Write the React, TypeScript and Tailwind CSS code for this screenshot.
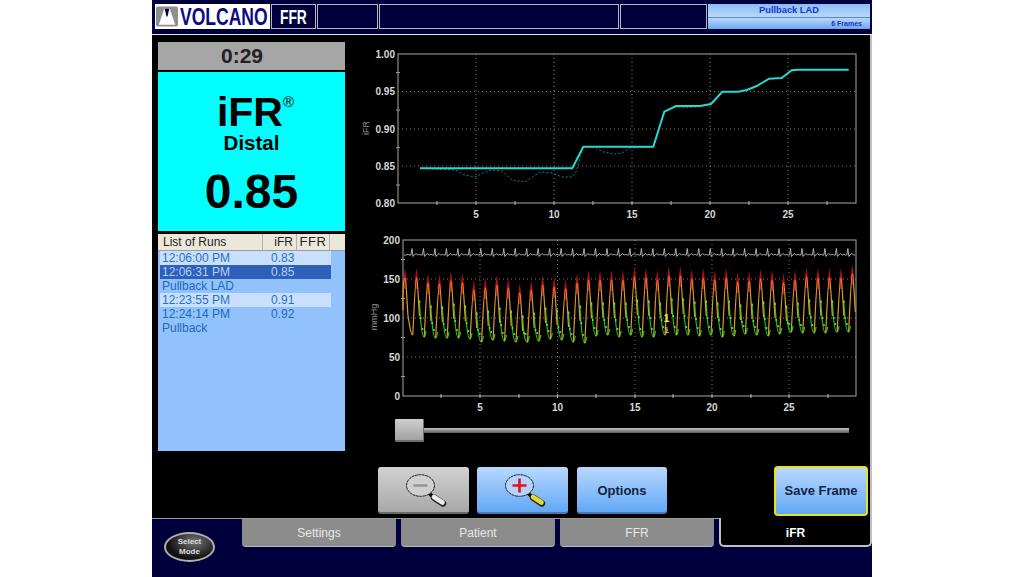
import React from "react";

const NAVY = "#00003c";
const font = { fontFamily: '"Liberation Sans", Arial, sans-serif' };

const cyanPts: [number, number][] = [[420,168.3],[572.3,168.3],[583.3,146.7],[653.3,146.7],[664.3,111.7],[676,106],[700,106],[711,104],[722.3,91.7],[738.3,91.7],[746.7,90],[756.7,86],[769,78.7],[781.7,78],[791.7,70.3],[798.3,69.7],[848.7,69.7]];
const dashPts: [number, number][] = [[420,168.3],[455,170],[465,175],[475,177],[483,173],[492,170],[502,171],[512,180],[525,182],[532,177],[540,172],[552,173],[562,177],[572,177],[576,172],[583,146.7],[595,147],[603,152],[615,154],[622,153],[630,148],[653,146.7],[664.3,111.7],[676,107],[690,107.5],[700,106.5],[711,104]];
const toPts = (p: [number, number][]) => p.map((q) => q.join(",")).join(" ");

function Chart1() {
  const xs = [476, 554, 632, 710, 788];
  const minor = [437, 515, 593, 671, 749, 827];
  const ys: [string, number][] = [["1.00",54],["0.95",91.5],["0.90",129],["0.85",166],["0.80",203]];
  return (
    <svg viewBox="355 45 510 180" className="w-[510px] h-[180px] block" style={font}>
      {ys.slice(1, 4).map(([, y]) => <line key={y} x1={398} x2={856} y1={y} y2={y} stroke="#9a9a9a" strokeWidth={0.8} strokeDasharray="1 3" />)}
      {xs.map((x) => <line key={x} x1={x} x2={x} y1={54} y2={203} stroke="#9a9a9a" strokeWidth={0.8} strokeDasharray="1 3" />)}
      <rect x={398} y={54} width={458} height={149} fill="none" stroke="#8c8c8c" strokeWidth={1.2} />
      {[72.6,110,147.6,185].map((y) => <line key={y} x1={396} x2={400} y1={y} y2={y} stroke="#999" />)}
      {[...minor, ...xs].map((x) => <line key={x} x1={x} x2={x} y1={201} y2={205} stroke="#bbb" />)}
      {ys.map(([t, y]) => <text key={t} x={395} y={y + 3.5} textAnchor="end" fontSize={10} fontWeight={700} fill="#d8d8d8">{t}</text>)}
      {xs.map((x, i) => <text key={x} x={x} y={218} textAnchor="middle" fontSize={10} fontWeight={700} fill="#d8d8d8">{(i + 1) * 5}</text>)}
      <text transform="translate(369 128) rotate(-90)" textAnchor="middle" fontSize={9} fill="#8f8f8f">iFR</text>
      <polyline points={toPts(dashPts)} fill="none" stroke="#17867f" strokeWidth={1} strokeDasharray="2 2" />
      <polyline points={toPts(cyanPts)} fill="none" stroke="#2ad6d0" strokeWidth={2} />
    </svg>
  );
}

// Per-beat peak and trough heights of the pressure trace, in page pixels
const pk = [278,278,283,284,281,283,290,288,285,288,293,290,285,287,289,283,280,280,280,280,277,278,280,276,276,279,278,280,278,282,281,279,280,283,280,277,278,278,278,274];
const tr = [335,337,338,338,338,339,342,340,341,342,342,341,339,340,342,343,336,335,337,335,337,337,335,335,335,336,335,337,336,334,335,336,334,332,333,333,333,332,332,331];

function Chart2() {
  const xs = [480, 557.5, 635, 712, 789];
  const minor = [441, 519, 596, 673, 751, 828];
  const sp = 11.47;
  const x0 = 405;
  const ecg: string[] = [];
  for (let i = 0; i < 39; i++) {
    const b = x0 + 6 + i * sp;
    ecg.push(`L${b - 4},255 l1,-1 l1,1 L${b},255 l1,-6.5 l1,8 l1,-1.5 L${b + 3.5},255 l1.5,-1.6 l1.5,1.6`);
  }
  const orange: string[] = [];
  const red: string[] = [];
  const green: string[] = [];
  const dots: [number, number][] = [];
  pk.forEach((yp, i) => {
    const xp = x0 + i * sp;
    const yt = tr[i];
    const prev = i > 0 ? tr[i - 1] : 310;
    const xt = xp + 7.6;
    const xStart = Math.max(xp - 3.7, 403);
    orange.push(`M${xStart},${prev} C${xp - 2.4},${prev - 25} ${xp - 1.2},${yp} ${xp},${yp} C${xp + 1.2},${yp} ${xp + 1.8},${yp + 22} ${xp + 3},${yp + 38}`);
    if (i === 0) orange.push(`M${xp + 3},${yp + 38} C${xp + 4},${yt - 14} ${xt - 2},${yt} ${xt},${yt}`);
    red.push(`M${xp},${yp - 10} L${xp + 1.9},${yp + 3} L${xp + 1},${yp + 11} L${xp - 1},${yp + 11} L${xp - 1.9},${yp + 3} Z`);
    if (i > 0 && xt < 857) {
      green.push(`M${xp + 2.8},${yp + 22} C${xp + 4},${yp + 44} ${xt - 2},${yt} ${xt},${yt} C${xt + 0.8},${yt} ${xt + 1.4},${yt - 2} ${xt + 2},${yt - 6}`);
      dots.push([xp + 3, yp + 24], [xp + 4.3, yp + 40], [xp + 6, yt - 8]);
    }
  });
  const ys: [string, number][] = [["200",240],["150",279],["100",318],["50",357],["0",396]];
  return (
    <svg viewBox="355 232 510 180" className="w-[510px] h-[180px] block" style={font}>
      {[279, 318, 357].map((y) => <line key={y} x1={403} x2={856} y1={y} y2={y} stroke="#9a9a9a" strokeWidth={0.8} strokeDasharray="1 3" />)}
      {xs.map((x) => <line key={x} x1={x} x2={x} y1={240} y2={396} stroke="#9a9a9a" strokeWidth={0.8} strokeDasharray="1 3" />)}
      <rect x={403} y={240} width={453} height={156} fill="none" stroke="#8c8c8c" strokeWidth={1.2} />
      {[259.5,298.5,337.5,376.5].map((y) => <line key={y} x1={401} x2={405} y1={y} y2={y} stroke="#999" />)}
      {[...minor, ...xs].map((x) => <line key={x} x1={x} x2={x} y1={394} y2={398} stroke="#bbb" />)}
      {ys.map(([t, y]) => <text key={t} x={400} y={y + 3.5} textAnchor="end" fontSize={10} fontWeight={700} fill="#d8d8d8">{t}</text>)}
      {xs.map((x, i) => <text key={x} x={x} y={411} textAnchor="middle" fontSize={10} fontWeight={700} fill="#d8d8d8">{(i + 1) * 5}</text>)}
      <text transform="translate(377 317) rotate(-90)" textAnchor="middle" fontSize={9} fill="#8f8f8f">mmHg</text>
      <path d={`M404,255 ${ecg.join(" ")} L855,255`} fill="none" stroke="#d0d0d0" strokeWidth={0.8} />
      <path d={red.join(" ")} fill="#a8101c" />
      <path d={green.join(" ")} fill="none" stroke="#19c419" strokeWidth={1.3} />
      {dots.map(([x, y], i) => <circle key={i} cx={x} cy={y} r={1} fill="#55e855" />)}
      <path d={orange.join(" ")} fill="none" stroke="#e09a2c" strokeWidth={1.2} />
      <text x={666.5} y={322} textAnchor="middle" fontSize={10} fontWeight={700} fill="#f2f23a">1</text>
      <text x={666.5} y={333} textAnchor="middle" fontSize={9} fontWeight={700} fill="#d98a8a">1</text>
    </svg>
  );
}

function Lens({ fill, sign, handle }: { fill: string; sign: "plus" | "minus"; handle: string }) {
  return (
    <svg viewBox="0 0 41 33" className="w-[41px] h-[33px] block ml-[5px] mt-[2px]">
      <line x1="22" y1="18" x2="27" y2="23" stroke="#111" strokeWidth="3.5" />
      <line x1="28" y1="23.5" x2="37" y2="29.5" stroke="#222" strokeWidth="6.4" strokeLinecap="round" />
      <line x1="28" y1="23" x2="36.5" y2="28.5" stroke={handle} strokeWidth="4.6" strokeLinecap="round" />
      <ellipse cx="14.5" cy="11.5" rx="14" ry="10.8" fill={fill} stroke="#1b1b1b" strokeWidth="1" strokeDasharray="3 0.5" />
      {sign === "plus" ? (
        <path d="M7.5 11.5h14M14.5 4.5v14" stroke="#e01020" strokeWidth="2.6" />
      ) : (
        <path d="M7.5 11.5h14" stroke="#969696" strokeWidth="2.6" />
      )}
    </svg>
  );
}

const blueBtn = "bg-gradient-to-b from-[#b8d8ff] to-[#62a8f4]";

const runs = [
  { t: "12:06:00 PM", v: "0.83", kind: "light" },
  { t: "12:06:31 PM", v: "0.85", kind: "sel" },
  { t: "Pullback LAD", v: "", kind: "" },
  { t: "12:23:55 PM", v: "0.91", kind: "light" },
  { t: "12:24:14 PM", v: "0.92", kind: "" },
  { t: "Pullback", v: "", kind: "" },
];

export default function App() {
  return (
    <div className="w-[1024px] h-[577px] bg-white flex justify-center overflow-hidden" style={font}>
      <div className="w-[720px] h-[577px] flex flex-col">
        {/* header */}
        <div className="h-[35px] shrink-0 border-b border-[#e8e8e8]" style={{ background: NAVY }}>
          <div className="flex items-stretch h-[25px] mt-[4px] pl-[3px] pr-[2px] gap-px">
            <div className="w-[115px] bg-white flex items-center pl-[1px] gap-[2px]">
              <svg viewBox="0 0 24 22" className="w-[22px] h-[21px] shrink-0">
                <rect width="24" height="22" rx="2" fill="#8f8f8f" />
                <path d="M3 20 L9 2.5 H15 L21 20 Z" fill="#fff" />
                <path d="M9.5 2.5 H14.5 L12.6 11 H11.4 Z" fill="#00004a" />
              </svg>
              <span className="text-[#0b0b80] font-bold text-[24px] leading-none scale-x-[0.73] origin-left whitespace-nowrap">VOLCANO</span>
            </div>
            <div className="w-[45px] border border-[#b8b8b8] flex items-center justify-center text-white font-bold text-[21px] leading-none">
              <span className="scale-x-[0.66]">FFR</span>
            </div>
            <div className="w-[61px] border border-[#b8b8b8]" />
            <div className="w-[240px] border border-[#b8b8b8]" />
            <div className="w-[87px] border border-[#b8b8b8]" />
            <div className="flex-1 flex flex-col">
              <div className="h-[14px] bg-gradient-to-b from-[#8cbcf4] to-[#b8d8fc] text-[#1a34cc] font-bold text-[9.3px] leading-[13px] text-center border-b border-[#5f88b8]">Pullback LAD</div>
              <div className="flex-1 bg-gradient-to-b from-[#b8d8fc] to-[#6ea8ec] text-[#1a34cc] font-bold text-[7px] leading-[11px] text-right pr-[8px]">6 Frames</div>
            </div>
          </div>
        </div>

        {/* body */}
        <div className="h-[483px] shrink-0 bg-black flex flex-col border-r-2 border-[#c0c0c0]">
          <div className="flex h-[424px] shrink-0">
            {/* left */}
            <div className="w-[187px] ml-[6px] mt-[7px] flex flex-col gap-[2px] shrink-0 h-[409px]">
              <div className="h-[28px] bg-[#a6a6a6] text-[#222] font-bold text-[21px] flex items-center justify-center pr-[19px]">0:29</div>
              <div className="h-[159px] bg-[#00ffff] text-black flex flex-col items-center">
                <div className="mt-[20px] font-bold text-[41px] leading-[41px] pl-[8px] whitespace-nowrap">iFR<span className="text-[15px] font-normal align-top relative top-[2px] leading-none">®</span></div>
                <div className="font-bold text-[20.5px] leading-[22px] mt-[-1px]">Distal</div>
                <div className="font-bold text-[48px] leading-[50px] mt-[13px]">0.85</div>
              </div>
              <div className="mt-px flex-1 bg-[#92c2fb] flex flex-col">
                <div className="h-[17px] bg-[#ece8d9] flex text-[#222] text-[12px] leading-[16px] border-b border-[#9a9a9a]">
                  <div className="w-[105px] pl-[5px] border-r border-[#b0b0b0]">List of Runs</div>
                  <div className="w-[34px] text-right pr-[3px] border-r border-[#b0b0b0]">iFR</div>
                  <div className="w-[33px] text-center text-[13px] tracking-[0.5px] border-r border-[#b0b0b0]">FFR</div>
                </div>
                <div className="pl-[2px] w-[173px]">
                  {runs.map((r) => (
                    <div
                      key={r.t}
                      className={`h-[14px] flex text-[12px] leading-[14px] ${r.kind === "sel" ? "bg-[#2e60ba] text-[#b4d0f4]" : r.kind === "light" ? "bg-[#c8e0fe] text-[#2a70c2]" : "text-[#1f68bc]"}`}
                    >
                      <div className="w-[109px] pl-[2px]">{r.t}</div>
                      <div className="pl-[2px]">{r.v}</div>
                    </div>
                  ))}
                </div>
              </div>
            </div>
            {/* right */}
            <div className="flex flex-col ml-[10px] pt-[10px]">
              <Chart1 />
              <div className="mt-[7px]"><Chart2 /></div>
              <div className="flex items-center ml-[40px] mt-[7px]">
                <div className="w-[29px] h-[23px] bg-gradient-to-b from-[#cfcfcf] to-[#a2a2a2] border-b-2 border-r border-[#6e6e6e] rounded-[1px]" />
                <div className="w-[425px] h-[5px] bg-gradient-to-b from-[#c4c4c4] to-[#5c5c5c]" />
              </div>
            </div>
          </div>
          {/* buttons */}
          <div className="flex mt-[8px] ml-[226px] items-start">
            <button className="w-[91px] h-[47px] rounded-[3px] bg-gradient-to-b from-[#d2d2d2] to-[#a8a8a8] border-b-2 border-[#6a6a6a] flex items-center justify-center">
              <Lens fill="#cfcfcf" sign="minus" handle="#ececec" />
            </button>
            <button className={`w-[91px] h-[47px] ml-[8px] rounded-[3px] ${blueBtn} border-b-2 border-[#4a78b0] flex items-center justify-center`}>
              <Lens fill="#b4d4fb" sign="plus" handle="#e6d82c" />
            </button>
            <button className={`w-[90px] h-[47px] ml-[9px] pt-[2px] rounded-[3px] ${blueBtn} border-b-2 border-[#4a78b0] text-[#12233f] font-bold text-[13px]`}>Options</button>
            <button className={`w-[94px] h-[50px] ml-[107px] mt-[-1px] rounded-[4px] ${blueBtn} border-2 border-[#e8e21e] text-[#12233f] font-bold text-[13px]`}>Save Frame</button>
          </div>
        </div>

        {/* tabs */}
        <div className="flex-1 flex border-t border-[#9a9a9a] pl-[85px] gap-[5px] items-start" style={{ background: NAVY }}>
          <div className="relative w-0 h-0">
            <div className="absolute left-[-73px] top-[13px] w-[51px] h-[30px] rounded-[50%] border-2 border-[#b0b0b0] bg-[radial-gradient(ellipse_at_60%_30%,#777,#111_65%)] text-[#dcdcdc] text-[8px] font-bold leading-[10px] flex items-center justify-center text-center">Select<br />Mode</div>
          </div>
          {["Settings", "Patient", "FFR"].map((t) => (
            <div key={t} className="w-[154px] h-[28px] bg-[#8c8c8c] text-[#e8e8e8] text-[12px] leading-[29px] text-center rounded-b-[4px] border-b border-[#b8b8b8]">{t}</div>
          ))}
          <div className="w-[153px] h-[29px] mt-[-1px] bg-black text-white font-bold text-[12px] leading-[31px] text-center rounded-b-[5px] border-b-2 border-l-2 border-r-2 border-[#c0c0c0]">iFR</div>
        </div>
      </div>
    </div>
  );
}
